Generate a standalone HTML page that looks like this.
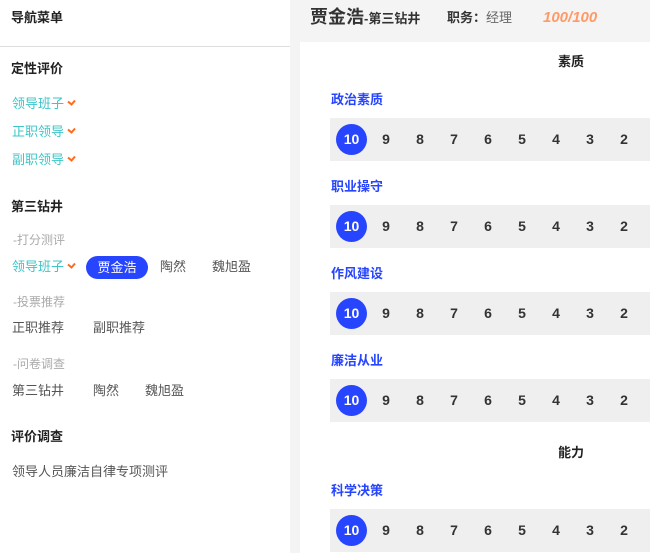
<!DOCTYPE html>
<html><head><meta charset="utf-8"><style>
*{margin:0;padding:0;box-sizing:border-box}
body{width:650px;height:553px;overflow:hidden;background:#f4f4f4;font-family:"Liberation Sans","Noto Sans CJK SC",sans-serif;position:relative}
.a{position:absolute;white-space:nowrap;line-height:1}
#left{position:absolute;left:0;top:0;width:290px;height:553px;background:#fff}
.t{font-size:13px;font-weight:bold;color:#222}
.c{font-size:13px;color:#3cc6c8}
.ck{display:inline-block;width:9px;height:7px;margin-left:3px;vertical-align:2px}
.g{font-size:12px;color:#aaa}
.n{font-size:13px;color:#555}
#right{position:absolute;left:300px;top:42px;width:350px;height:511px;background:#fff}
.st{font-size:13px;font-weight:bold;color:#2745ff}
.bar{position:absolute;left:30px;width:320px;height:43px;background:#efefef}
.num{position:absolute;top:14px;width:30px;text-align:center;font-size:14px;font-weight:bold;color:#333;line-height:1}
.on{top:6px;width:31px;height:31px;line-height:31px;border-radius:50%;background:#2745ff;color:#fff}
</style></head><body>
<div id="left">
<div class="a t" style="left:11px;top:11px">导航菜单</div>
<div style="position:absolute;left:0;top:46px;width:290px;height:1px;background:#ddd"></div>
<div class="a t" style="left:11px;top:62px">定性评价</div>
<div class="a c" style="left:12px;top:97px">领导班子<svg class="ck" viewBox="0 0 9 7"><path d="M1 2.5L4.5 5.5L8 1.5" fill="none" stroke="#ff6a1a" stroke-width="2"/></svg></div>
<div class="a c" style="left:12px;top:125px">正职领导<svg class="ck" viewBox="0 0 9 7"><path d="M1 2.5L4.5 5.5L8 1.5" fill="none" stroke="#ff6a1a" stroke-width="2"/></svg></div>
<div class="a c" style="left:12px;top:153px">副职领导<svg class="ck" viewBox="0 0 9 7"><path d="M1 2.5L4.5 5.5L8 1.5" fill="none" stroke="#ff6a1a" stroke-width="2"/></svg></div>
<div class="a t" style="left:11px;top:200px">第三钻井</div>
<div class="a g" style="left:13px;top:234px">-打分测评</div>
<div class="a c" style="left:12px;top:260px">领导班子<svg class="ck" viewBox="0 0 9 7"><path d="M1 2.5L4.5 5.5L8 1.5" fill="none" stroke="#ff6a1a" stroke-width="2"/></svg></div>
<div class="a" style="left:86px;top:256px;width:62px;height:23px;border-radius:12px;background:#2745ff;color:#fff;font-size:13px;line-height:23px;text-align:center">贾金浩</div>
<div class="a n" style="left:160px;top:260px">陶然</div>
<div class="a n" style="left:212px;top:260px">魏旭盈</div>
<div class="a g" style="left:13px;top:296px">-投票推荐</div>
<div class="a n" style="left:12px;top:321px">正职推荐</div>
<div class="a n" style="left:93px;top:321px">副职推荐</div>
<div class="a g" style="left:13px;top:358px">-问卷调查</div>
<div class="a n" style="left:12px;top:384px">第三钻井</div>
<div class="a n" style="left:93px;top:384px">陶然</div>
<div class="a n" style="left:145px;top:384px">魏旭盈</div>
<div class="a t" style="left:11px;top:430px">评价调查</div>
<div class="a n" style="left:12px;top:465px">领导人员廉洁自律专项测评</div>
</div>
<div class="a" style="left:310px;top:8px;font-size:18px;font-weight:bold;color:#333">贾金浩<span style="font-size:13px">-第三钻井</span></div>
<div class="a" style="left:447px;top:11px;font-size:13px;font-weight:bold;color:#333">职务：<span style="font-weight:normal;color:#666">经理</span></div>
<div class="a" style="left:543px;top:10px;font-size:15px;font-weight:bold;font-style:italic;color:#ff9a66">100/100</div>
<div id="right">
<div class="a t" style="left:258px;top:13px">素质</div>
<div class="a st" style="left:31px;top:51px">政治素质</div>
<div class="bar" style="top:76px"><div class="num on" style="left:6px">10</div><div class="num" style="left:41px">9</div><div class="num" style="left:75px">8</div><div class="num" style="left:109px">7</div><div class="num" style="left:143px">6</div><div class="num" style="left:177px">5</div><div class="num" style="left:211px">4</div><div class="num" style="left:245px">3</div><div class="num" style="left:279px">2</div></div>
<div class="a st" style="left:31px;top:138px">职业操守</div>
<div class="bar" style="top:163px"><div class="num on" style="left:6px">10</div><div class="num" style="left:41px">9</div><div class="num" style="left:75px">8</div><div class="num" style="left:109px">7</div><div class="num" style="left:143px">6</div><div class="num" style="left:177px">5</div><div class="num" style="left:211px">4</div><div class="num" style="left:245px">3</div><div class="num" style="left:279px">2</div></div>
<div class="a st" style="left:31px;top:225px">作风建设</div>
<div class="bar" style="top:250px"><div class="num on" style="left:6px">10</div><div class="num" style="left:41px">9</div><div class="num" style="left:75px">8</div><div class="num" style="left:109px">7</div><div class="num" style="left:143px">6</div><div class="num" style="left:177px">5</div><div class="num" style="left:211px">4</div><div class="num" style="left:245px">3</div><div class="num" style="left:279px">2</div></div>
<div class="a st" style="left:31px;top:312px">廉洁从业</div>
<div class="bar" style="top:337px"><div class="num on" style="left:6px">10</div><div class="num" style="left:41px">9</div><div class="num" style="left:75px">8</div><div class="num" style="left:109px">7</div><div class="num" style="left:143px">6</div><div class="num" style="left:177px">5</div><div class="num" style="left:211px">4</div><div class="num" style="left:245px">3</div><div class="num" style="left:279px">2</div></div>
<div class="a t" style="left:258px;top:404px">能力</div>
<div class="a st" style="left:31px;top:442px">科学决策</div>
<div class="bar" style="top:467px"><div class="num on" style="left:6px">10</div><div class="num" style="left:41px">9</div><div class="num" style="left:75px">8</div><div class="num" style="left:109px">7</div><div class="num" style="left:143px">6</div><div class="num" style="left:177px">5</div><div class="num" style="left:211px">4</div><div class="num" style="left:245px">3</div><div class="num" style="left:279px">2</div></div>
</div>
</body></html>
